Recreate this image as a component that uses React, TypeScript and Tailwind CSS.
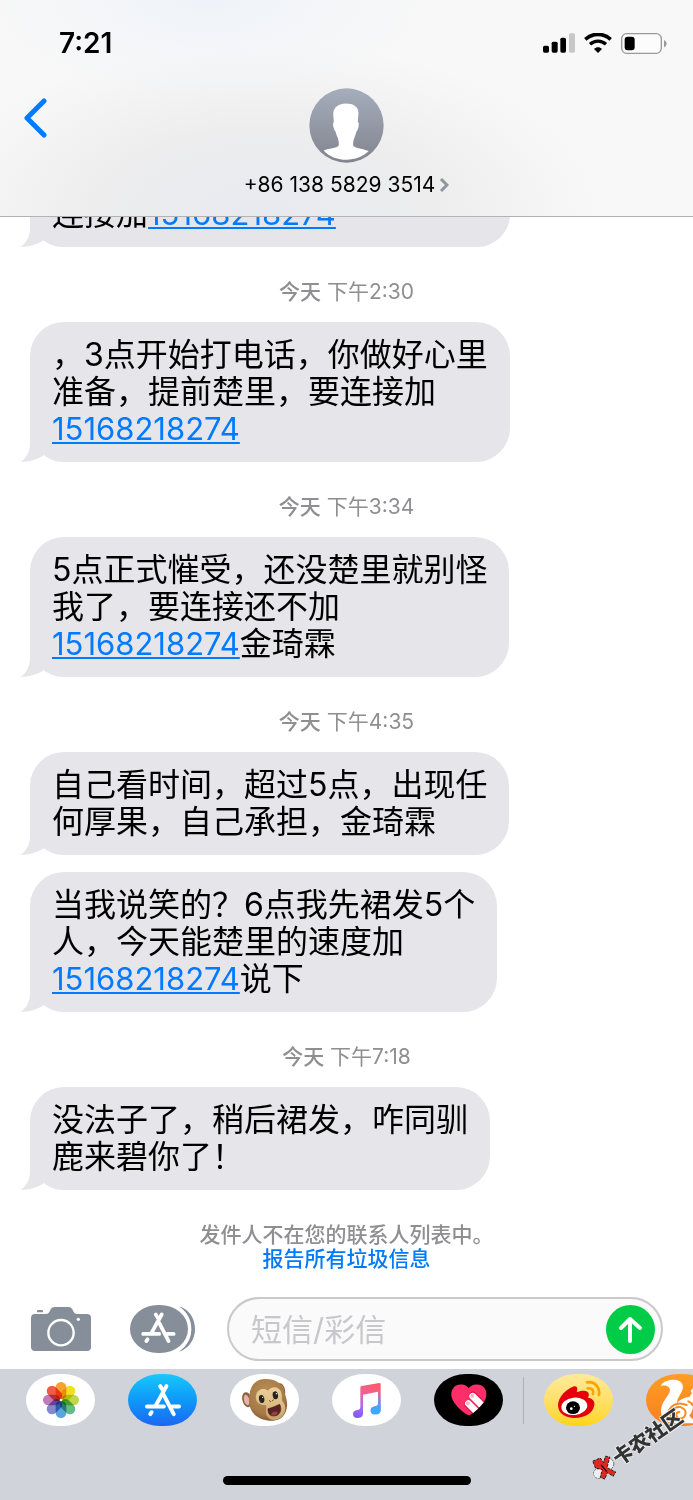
import type { ReactNode } from 'react'

interface Message {
  id: number
  time?: string
  // each entry is one line of the bubble; digits-only runs of 11 become phone links
  lines: string[]
  wide?: boolean
}

const MESSAGES: Message[] = [
  { id: 1, lines: ['连接加15168218274'], wide: true },
  { id: 2, time: '下午2:30', lines: ['，3点开始打电话，你做好心里', '准备，提前楚里，要连接加', '15168218274'] },
  { id: 3, time: '下午3:34', lines: ['5点正式慛受，还没楚里就别怪', '我了，要连接还不加', '15168218274金琦霖'] },
  { id: 4, time: '下午4:35', lines: ['自己看时间，超过5点，出现任', '何厚果，自己承担，金琦霖'] },
  { id: 5, lines: ['当我说笑的？6点我先裙发5个', '人，今天能楚里的速度加', '15168218274说下'] },
  { id: 6, time: '下午7:18', lines: ['没法子了，稍后裙发，咋同驯', '鹿来碧你了！'] },
]

function StatusIcons() {
  return (
    <div className="flex items-center gap-[9px]">
      <svg className="h-5 w-8" viewBox="0 0 96 60" aria-hidden="true">
        <rect x="0" y="38" width="18" height="21" rx="5" />
        <rect x="26" y="26" width="18" height="33" rx="5" />
        <rect x="52" y="14" width="17" height="45" rx="5" />
        <rect x="78" y="1" width="18" height="58" rx="5" fill="#c7c7c7" />
      </svg>
      <svg className="h-5 w-7" viewBox="0 0 84 60" fill="none" stroke="#000" aria-hidden="true">
        <path d="M4 19 C26 -1 58 -1 80 19" strokeWidth="11" />
        <path d="M18 34 C32 21 52 21 66 34" strokeWidth="10" />
        <path d="M42 60 L30 48 C37 41 47 41 54 48 Z" fill="#000" stroke="none" />
      </svg>
      <svg className="h-[21px] w-[46px]" viewBox="0 0 138 63" aria-hidden="true">
        <rect x="2" y="2" width="119" height="59" rx="15" fill="#fcfcfc" stroke="#999" strokeWidth="4" />
        <rect x="11" y="11" width="30" height="41" rx="9" />
        <path d="M129 21 Q137 25 137 32 Q137 39 129 43 Z" fill="#999" />
      </svg>
    </div>
  )
}

function Avatar() {
  return (
    <svg className="h-[75px] w-[75px]" viewBox="57 25 226 224" aria-hidden="true">
      <defs>
        <linearGradient id="avatar" x1="0" y1="0" x2="0" y2="1">
          <stop offset="0" stopColor="#a6adbb" />
          <stop offset="1" stopColor="#80848e" />
        </linearGradient>
      </defs>
      <circle cx="170" cy="137" r="112" fill="url(#avatar)" />
      <path
        fill="#fff"
        d="M168 71 C190 71 207 80 206 102 L204 127 C209 126 207 142 203 151 C199 153 199 162 196 168 C193 176 190 182 190 197 C194 205 215 205 237 214 C220 232 195 240 170 240 C145 240 118 232 101 212 C122 205 143 206 147 196 C147 184 145 176 141 168 C138 162 138 153 134 151 C129 138 128 128 132 127 L130 102 C130 82 148 71 168 71 Z"
      />
    </svg>
  )
}

function AppStoreGlyph() {
  return (
    <g fill="none" stroke="#fff" strokeWidth="12" strokeLinecap="round">
      <path d="M46 9 L53 20" />
      <path d="M65 9 L33 67" />
      <path d="M57 36 L87 94" />
      <path d="M6 71 H57" />
      <path d="M82 71 H103" />
      <path d="M20 88 L16 94" />
    </g>
  )
}

function PhotosIcon() {
  const petals = ['#f8a12d', '#f0e020', '#bfd64b', '#62bd84', '#57a5dc', '#8686cb', '#c279b8', '#f15b49']
  return (
    <svg className="h-9 w-9" viewBox="-54 -54 108 108" aria-hidden="true">
      {petals.map((color, i) => (
        <rect
          key={color}
          className="mix-blend-multiply"
          x="-16"
          y="-54"
          width="32"
          height="52"
          rx="16"
          fill={color}
          transform={`rotate(${i * 45})`}
        />
      ))}
      <circle r="4" fill="#fff" />
    </svg>
  )
}

function MonkeyIcon() {
  return (
    <svg className="h-[42px] w-[46px]" viewBox="60 41 138 126" aria-hidden="true">
      <defs>
        <radialGradient id="fur" cx="0.45" cy="0.35" r="0.7">
          <stop offset="0" stopColor="#bd8f55" />
          <stop offset="0.7" stopColor="#a57a48" />
          <stop offset="1" stopColor="#7c5630" />
        </radialGradient>
        <linearGradient id="face" x1="0" y1="0" x2="0" y2="1">
          <stop offset="0" stopColor="#ecd09c" />
          <stop offset="0.6" stopColor="#dcb981" />
          <stop offset="1" stopColor="#c79d68" />
        </linearGradient>
      </defs>
      <ellipse cx="75" cy="103" rx="14" ry="23" fill="#8c6238" transform="rotate(-14 75 103)" />
      <ellipse cx="74" cy="104" rx="8" ry="16" fill="#e9b0ae" transform="rotate(-14 74 104)" />
      <ellipse cx="177" cy="75" rx="12" ry="22" fill="#8c6238" transform="rotate(-14 177 75)" />
      <ellipse cx="178" cy="75" rx="7" ry="16" fill="#e9b0ae" transform="rotate(-14 178 75)" />
      <path
        fill="url(#fur)"
        d="M121 42 C153 38 181 52 187 78 C190 92 197 106 195 123 C192 148 178 166 153 166 C130 167 111 160 98 148 C84 135 79 116 82 91 C85 62 98 46 121 42 Z"
      />
      <path
        fill="url(#face)"
        d="M102 91 C106 72 124 66 138 76 C148 61 170 62 177 79 C182 92 178 101 181 108 C196 121 191 151 170 161 C151 169 134 160 132 143 C131 131 135 123 131 119 C114 121 99 110 102 91 Z"
      />
      <ellipse cx="119" cy="101" rx="8" ry="12" fill="#25231f" transform="rotate(-10 119 101)" />
      <ellipse cx="160" cy="90" rx="8" ry="12" fill="#25231f" transform="rotate(-10 160 90)" />
      <circle cx="122" cy="96" r="2" fill="#fff" />
      <circle cx="163" cy="85" r="2" fill="#fff" />
      <path d="M142 106 L146 109 M154 103 L151 107" stroke="#785334" strokeWidth="3" strokeLinecap="round" />
      <path
        fill="#5a2222"
        stroke="#4a2418"
        strokeWidth="2"
        d="M138 130 C151 128 162 121 173 117 C180 131 175 147 162 151 C147 155 137 147 138 130 Z"
      />
      <path fill="#8f4543" d="M147 149 C150 138 162 136 168 142 C163 151 154 153 147 149 Z" />
    </svg>
  )
}

function MusicIcon() {
  return (
    <svg className="h-[35px] w-7" viewBox="391 53 84 105" aria-hidden="true">
      <defs>
        <linearGradient id="note" x1="0.5" y1="0" x2="0.25" y2="1">
          <stop offset="0" stopColor="#fb5b6a" />
          <stop offset="0.3" stopColor="#f2609b" />
          <stop offset="0.65" stopColor="#b569e9" />
          <stop offset="1" stopColor="#7f5cff" />
        </linearGradient>
        <linearGradient id="noteBlue" x1="0" y1="0" x2="0" y2="1">
          <stop offset="0.25" stopColor="#3fa9ff" stopOpacity="0" />
          <stop offset="0.8" stopColor="#3fa9ff" />
        </linearGradient>
      </defs>
      <path
        fill="url(#note)"
        d="M413 67 Q413 63 417 62 L470 53 Q474 53 474 57 V133 Q474 147 458 147 Q444 147 444 136 Q444 124 458 123 Q466 122 466 116 V79 L421 88 V146 Q420 158 404 158 Q391 158 391 147 Q391 135 404 134 Q413 133 413 126 Z"
      />
      <path
        fill="url(#noteBlue)"
        d="M466 53 H474 V133 Q474 147 458 147 Q444 147 444 136 Q444 124 458 123 Q466 122 466 116 Z"
      />
    </svg>
  )
}

function TouchIcon() {
  return (
    <svg className="h-8 w-9" viewBox="311 530 108 95" aria-hidden="true">
      <defs>
        <clipPath id="heart">
          <path d="M364 542 C376 527 397 527 408 538 C421 551 420 569 409 584 C397 601 379 616 365 624 C349 616 331 601 320 584 C309 568 309 551 321 538 C333 527 353 527 364 542 Z" />
        </clipPath>
      </defs>
      <g clipPath="url(#heart)">
        <rect x="305" y="525" width="120" height="105" fill="#ff2d68" />
        <path d="M363 590 L395 622 M377 564 L420 607" stroke="#e3134f" strokeWidth="24" strokeLinecap="round" />
        <path d="M363 588 L400 625 M376 566 L424 614" stroke="#fff" strokeWidth="20" strokeLinecap="round" />
        <circle cx="362" cy="587" r="6" fill="#ffb3c8" />
        <circle cx="375" cy="565" r="6" fill="#ffb3c8" />
      </g>
    </svg>
  )
}

function WeiboIcon() {
  return (
    <svg className="h-[42px] w-11" viewBox="84 56 132 126" aria-hidden="true">
      <path
        fill="#e6000b"
        d="M87 134 C88 110 112 86 135 78 C145 76 147 86 143 96 C154 90 172 89 178 97 C181 103 179 107 177 112 C190 114 198 122 196 134 C193 158 167 173 137 173 C108 173 87 158 87 134 Z"
      />
      <ellipse cx="136" cy="138" rx="39" ry="26" fill="#fff" transform="rotate(-7 136 138)" />
      <ellipse cx="132" cy="142" rx="21" ry="19" fill="#000" />
      <circle cx="127" cy="145" r="4" fill="#fff" />
      <circle cx="136" cy="138" r="2" fill="#fff" />
      <g fill="none" stroke="#ffa200" strokeWidth="8" strokeLinecap="round">
        <path d="M174 66 C198 61 214 82 210 104" />
        <path d="M176 84 C189 82 195 91 192 101" />
      </g>
    </svg>
  )
}

function SquirrelIcon() {
  return (
    <svg className="h-[52px] w-[70px] shrink-0" viewBox="345 42 210 156" aria-hidden="true">
      <path
        fill="#fff"
        d="M389 78 C396 63 417 57 436 60 C455 64 460 79 452 95 C446 107 437 117 438 130 C449 117 461 112 475 111 L483 99 C477 93 480 88 489 84 C490 77 493 72 498 70 C502 75 504 82 508 86 C519 91 525 104 517 113 C507 121 491 121 484 129 C488 145 483 158 475 166 C478 176 494 181 504 190 L430 190 C400 187 386 168 391 143 C395 123 415 106 417 91 C417 79 403 74 389 78 Z"
      />
      <g fill="none" stroke="#fb8c1e" strokeWidth="6" strokeLinecap="round">
        <path d="M409 170 C412 137 438 122 467 135" />
        <path d="M422 183 C410 158 429 137 450 142 C471 149 466 176 446 175 C432 172 433 156 445 156" />
        <path d="M472 124 C480 127 483 130 484 135" />
      </g>
    </svg>
  )
}

function Watermark() {
  return (
    <div className="pointer-events-none absolute right-[3px] bottom-[42px] flex w-[106px] rotate-[-35deg] items-center">
      <svg className="h-[26px] w-[26px] shrink-0" viewBox="0 0 84 84" aria-hidden="true">
        <g transform="rotate(35 42 42)">
          <ellipse cx="24" cy="60" rx="17" ry="16" fill="#eee" stroke="#333" strokeWidth="2" strokeDasharray="7 3" />
          <ellipse cx="56" cy="29" rx="17" ry="18" fill="#eee" stroke="#333" strokeWidth="2" strokeDasharray="7 3" />
          <path
            fill="#dd2923"
            stroke="#111"
            strokeWidth="3"
            strokeDasharray="9 4"
            d="M5 20 L29 10 L40 25 L46 4 L60 7 L51 41 L79 55 L71 69 L52 57 L44 78 L29 72 L36 47 L14 43 Z"
          />
          <path d="M32 32 L50 54" stroke="#111" strokeWidth="4" />
        </g>
      </svg>
      <span className="text-[20px] leading-6 font-black whitespace-nowrap text-[#333] [text-shadow:1px_0_#eee,-1px_0_#eee,0_1px_#eee,0_-1px_#eee]">
        卡农社区
      </span>
    </div>
  )
}

function BubbleLine({ text }: { text: string }) {
  return (
    <>
      {text.split(/(\d{11})/).map((part, i) =>
        /^\d{11}$/.test(part) ? (
          <a
            key={i}
            href={`tel:${part}`}
            className="text-[31px] text-[#007aff] underline decoration-2 underline-offset-2 [text-decoration-skip-ink:none]"
          >
            {part}
          </a>
        ) : (
          part
        ),
      )}
    </>
  )
}

function Bubble({ lines, wide }: { lines: string[]; wide?: boolean }) {
  return (
    <div
      className={`relative rounded-[34px] bg-[#e5e5ea] px-[22px] pt-[14px] pb-[15px] text-[32px] leading-[37px] whitespace-nowrap text-black ${
        wide ? 'w-[480px]' : 'w-fit'
      }`}
    >
      <svg className="absolute bottom-0 -left-2.5 h-9 w-6" viewBox="0 0 24 36" fill="#e5e5ea" aria-hidden="true">
        <path d="M10 0 V17 C10 26 6 33 0 36 C9 36 17 33 23 30 V0 Z" />
      </svg>
      {lines.map((line) => (
        <p key={line} className="h-[37px]">
          <BubbleLine text={line} />
        </p>
      ))}
    </div>
  )
}

function TrayApp({ label, className, children }: { label: string; className: string; children: ReactNode }) {
  return (
    <button
      type="button"
      aria-label={label}
      className={`flex h-[52px] w-[69px] shrink-0 items-center justify-center overflow-hidden rounded-[32px/26px] ${className}`}
    >
      {children}
    </button>
  )
}

export default function App() {
  return (
    <div
      lang="zh-CN"
      className="flex h-screen flex-col overflow-hidden bg-white font-['Inter','Noto_Sans_CJK_SC',sans-serif]"
    >
      <header className="shrink-0 border-b border-[#b2b2b4] bg-[#f8f8f8] bg-[radial-gradient(ellipse_at_30%_0%,#eff3f9_0%,transparent_32%),radial-gradient(ellipse_48%_80%_at_38%_100%,#e7eaf0_0%,#ededee_50%,transparent_100%)] pb-[19px]">
        <div className="flex h-[86px] items-center justify-between pr-[26px] pl-[59px]">
          <span className="text-[28px] leading-8 font-semibold">7:21</span>
          <StatusIcons />
        </div>
        <div className="grid grid-cols-[1fr_auto_1fr] items-start pt-0.5">
          <button type="button" aria-label="返回" className="mt-[9px] ml-[23px] w-fit">
            <svg className="h-[42px] w-6" viewBox="0 0 24 42" fill="none" aria-hidden="true">
              <path d="M21 4 L4 21 L21 38" stroke="#007aff" strokeWidth="5" strokeLinecap="round" strokeLinejoin="round" />
            </svg>
          </button>
          <button type="button" className="flex flex-col items-center gap-2.5">
            <Avatar />
            <span className="flex items-center gap-1 text-[21px] leading-6">
              +86 138 5829 3514
              <svg className="h-4 w-2.5" viewBox="0 0 10 16" fill="none" aria-hidden="true">
                <path d="M2 2 L8 8 L2 14" stroke="#8e959f" strokeWidth="3" />
              </svg>
            </span>
          </button>
        </div>
      </header>

      <main className="flex min-h-0 flex-1 flex-col justify-end overflow-hidden pb-[26px]">
        {MESSAGES.map((msg) => (
          <section key={msg.id} className="mt-[17px] shrink-0">
            {msg.time && (
              <p className="pt-4 pb-[18px] text-center text-[21px] leading-6 text-[#8e8e93]">
                <span className="font-medium">今天</span> {msg.time}
              </p>
            )}
            <div className="pl-[30px]">
              <Bubble lines={msg.lines} wide={msg.wide} />
            </div>
          </section>
        ))}
        <div className="mt-[33px] shrink-0 text-center text-[21px] leading-6 font-medium">
          <p className="text-[#8e8e93]">发件人不在您的联系人列表中。</p>
          <button type="button" className="block w-full text-[#007aff]">
            报告所有垃圾信息
          </button>
        </div>
      </main>

      <form className="flex shrink-0 items-center pr-[30px] pb-2 pl-[31px]" onSubmit={(e) => e.preventDefault()}>
        <button type="button" aria-label="相机" className="mr-[39px]">
          <svg className="h-11 w-[60px]" viewBox="93 288 180 132" aria-hidden="true">
            <path
              fill="#868e99"
              d="M105 309 H138 Q145 309 148 303 L152 295 Q156 288 164 288 H205 Q213 288 217 295 L221 303 Q224 309 231 309 H261 Q273 309 273 321 V408 Q273 420 261 420 H105 Q93 420 93 408 V321 Q93 309 105 309 Z"
            />
            <rect x="111" y="297" width="18" height="7" rx="2" fill="#868e99" />
            <circle cx="183" cy="365" r="38" fill="none" stroke="#fff" strokeWidth="7" />
            <circle cx="235" cy="325" r="5" fill="#fff" />
          </svg>
        </button>
        <button type="button" aria-label="应用" className="mr-8">
          <svg className="h-12 w-[65px]" viewBox="390 282 195 144" aria-hidden="true">
            <rect x="390" y="282" width="174" height="144" rx="84" ry="72" fill="#868e99" />
            <path
              fill="#868e99"
              d="M537 286 C569 296 585 324 585 354 C585 384 569 412 537 422 C562 404 574 382 574 354 C574 326 562 304 537 286 Z"
            />
            <g transform="translate(424 302) scale(0.94)">
              <AppStoreGlyph />
            </g>
          </svg>
        </button>
        <div className="flex h-16 min-w-0 flex-1 items-center rounded-full border-2 border-[#c8c8cd] bg-[#fafafa] pr-1.5 pl-[22px]">
          <input
            type="text"
            aria-label="短信/彩信"
            placeholder="短信/彩信"
            className="min-w-0 flex-1 bg-transparent text-[31px] leading-[37px] outline-none placeholder:text-[#c7c7cc]"
          />
          <button type="submit" aria-label="发送" className="rounded-full bg-[#00cc47]">
            <svg className="h-[49px] w-[49px]" viewBox="0 0 49 49" fill="none" aria-hidden="true">
              <path d="M24 36 V14 M15 23 L24 14 L34 23" stroke="#fff" strokeWidth="4" strokeLinecap="round" strokeLinejoin="round" />
            </svg>
          </button>
        </div>
      </form>

      <footer className="relative flex shrink-0 flex-col items-center overflow-hidden bg-[#d1d3db] pt-[5px] pb-[15px]">
        <nav className="flex w-full items-center gap-[33px] pl-[26px]">
          <TrayApp label="照片" className="bg-white">
            <PhotosIcon />
          </TrayApp>
          <TrayApp label="App Store" className="bg-linear-to-b from-[#1cc8fb] to-[#1d65f2]">
            <svg className="h-[34px] w-9" viewBox="0 0 109 102" aria-hidden="true">
              <AppStoreGlyph />
            </svg>
          </TrayApp>
          <TrayApp label="动话表情" className="bg-white">
            <MonkeyIcon />
          </TrayApp>
          <TrayApp label="音乐" className="bg-white">
            <MusicIcon />
          </TrayApp>
          <div className="flex shrink-0 items-center gap-5">
            <TrayApp label="Digital Touch" className="bg-black">
              <TouchIcon />
            </TrayApp>
            <span className="h-[47px] w-px bg-[#adb0b6]" />
            <TrayApp label="微博" className="bg-linear-to-b from-[#ffea9a] to-[#ffd500]">
              <WeiboIcon />
            </TrayApp>
          </div>
          <TrayApp label="UC浏览器" className="bg-linear-to-b from-[#ff9d24] to-[#f98020]">
            <SquirrelIcon />
          </TrayApp>
        </nav>
        <div className="mt-[50px] h-[9px] w-[248px] rounded-full bg-black" />
        <Watermark />
      </footer>
    </div>
  )
}
